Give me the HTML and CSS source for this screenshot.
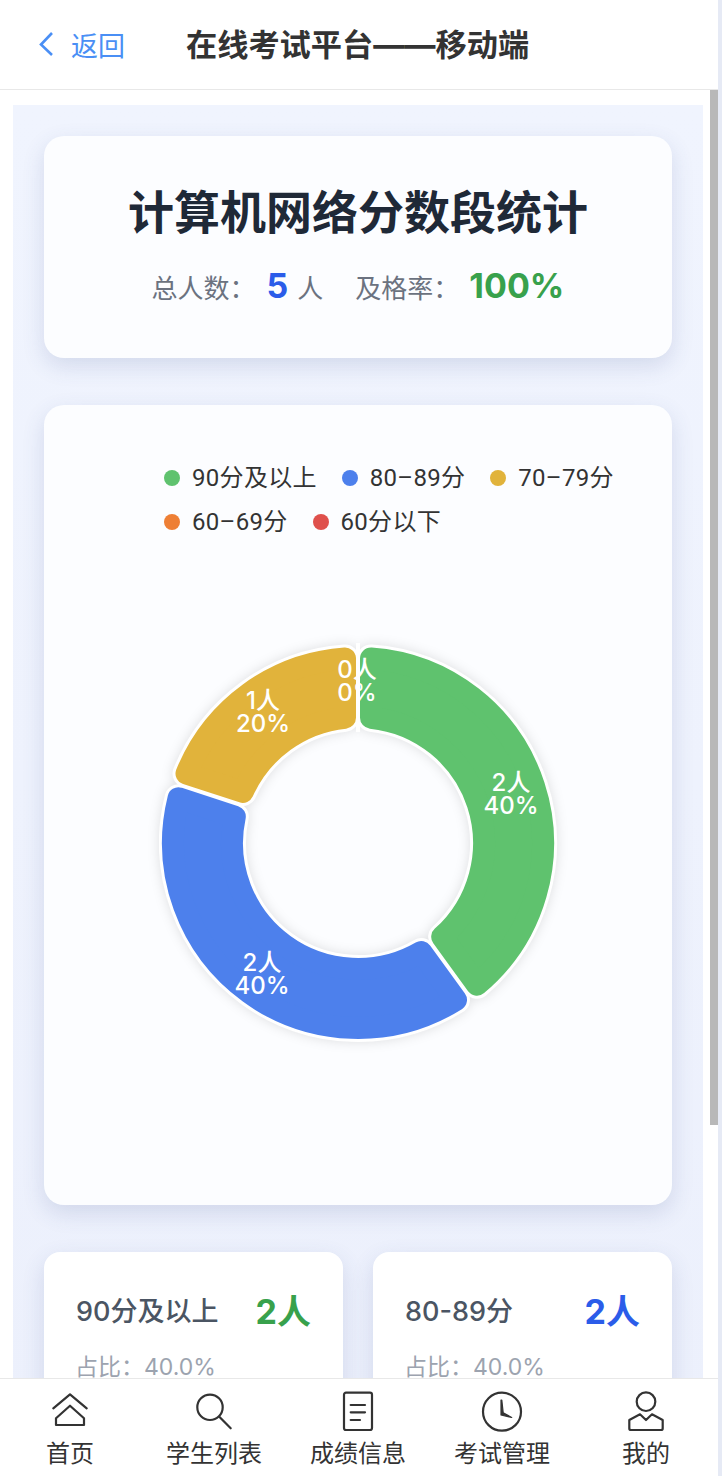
FILE: index.html
```html
<!DOCTYPE html>
<html lang="zh-CN">
<head>
    <meta charset="UTF-8">
    <meta name="viewport" content="width=device-width, initial-scale=1.0">
    <title>在线考试平台——移动端</title>
    <link rel="stylesheet" href="styles.css">
</head>
<body>
    <div class="app">
        <header class="topbar">
            <a class="back" href="#">
                <svg class="back-icon" viewBox="0 0 16 26"><polyline points="14,2 3,13.5 14,24"/></svg>
                <span>返回</span>
            </a>
            <h1 class="topbar-title">在线考试平台——移动端</h1>
        </header>

        <div class="viewport">
            <div class="scroll-area">
                <main class="main">
                    <section class="card summary">
                        <h2 class="summary-title">计算机网络分数段统计</h2>
                        <div class="summary-line">
                            <span>总人数：</span><b class="num num-blue">5</b><span class="unit">人</span>
                            <span class="pass-label">及格率：</span><b class="num num-green">100%</b>
                        </div>
                    </section>

                    <section class="card chart-card">
                        <ul class="legend">
                            <li><i class="dot dot-green"></i>90分及以上</li>
                            <li><i class="dot dot-blue"></i>80–89分</li>
                            <li><i class="dot dot-yellow"></i>70–79分</li>
                            <li><i class="dot dot-orange"></i>60–69分</li>
                            <li><i class="dot dot-red"></i>60分以下</li>
                        </ul>
                        <svg class="donut" viewBox="-210 -210 420 420">
                            <g class="donut-edge">
                                <path d="M13 -184.5 A185 185 0 0 1 119 141.7 L84.2 93.8 A126 126 0 0 0 13 -125.3 Z"/>
                                <path d="M98 156.9 A185 185 0 0 1 -179.5 -44.7 L-123.2 -26.4 A126 126 0 0 0 63.2 109 Z"/>
                                <path d="M-171.5 -69.4 A185 185 0 0 1 -13 -184.5 L-13 -125.3 A126 126 0 0 0 -115.2 -51.1 Z"/>
                            </g>
                            <path class="slice slice-green" d="M13 -184.5 A185 185 0 0 1 119 141.7 L84.2 93.8 A126 126 0 0 0 13 -125.3 Z"/>
                            <path class="slice slice-blue" d="M98 156.9 A185 185 0 0 1 -179.5 -44.7 L-123.2 -26.4 A126 126 0 0 0 63.2 109 Z"/>
                            <path class="slice slice-yellow" d="M-171.5 -69.4 A185 185 0 0 1 -13 -184.5 L-13 -125.3 A126 126 0 0 0 -115.2 -51.1 Z"/>
                            <line class="slice-zero" x1="0" y1="-200" x2="0" y2="-111"/>
                            <text class="donut-label" x="153" y="-61">2人</text>
                            <text class="donut-label" x="153" y="-38">40%</text>
                            <text class="donut-label" x="-96" y="119">2人</text>
                            <text class="donut-label" x="-96" y="142">40%</text>
                            <text class="donut-label" x="-95" y="-143">1人</text>
                            <text class="donut-label" x="-95" y="-120">20%</text>
                            <text class="donut-label" x="-1" y="-174">0人</text>
                            <text class="donut-label" x="-1" y="-151">0%</text>
                        </svg>
                    </section>

                    <section class="stats">
                        <div class="card stat">
                            <div class="stat-row">
                                <span class="stat-name">90分及以上</span>
                                <b class="stat-count num-green">2人</b>
                            </div>
                            <div class="stat-share">占比：40.0%</div>
                        </div>
                        <div class="card stat">
                            <div class="stat-row">
                                <span class="stat-name">80-89分</span>
                                <b class="stat-count num-blue">2人</b>
                            </div>
                            <div class="stat-share">占比：40.0%</div>
                        </div>
                    </section>
                </main>
            </div>
            <div class="scrollbar"><div class="scrollbar-thumb"></div></div>
        </div>

        <nav class="tabbar">
            <a class="tab" href="#">
                <svg class="tab-icon" viewBox="0 0 44 44">
                    <polyline points="5.3,18.3 22,4.3 38.7,18.3"/>
                    <path d="M8 28.3 L22 15.7 L36 28.3 V35 H8 Z"/>
                </svg>
                <span>首页</span>
            </a>
            <a class="tab" href="#">
                <svg class="tab-icon" viewBox="0 0 44 44">
                    <circle cx="18" cy="17.3" r="12.7"/>
                    <line x1="27.3" y1="26.7" x2="38.7" y2="38.3"/>
                </svg>
                <span>学生列表</span>
            </a>
            <a class="tab" href="#">
                <svg class="tab-icon" viewBox="0 0 44 44">
                    <rect x="8" y="2.7" width="28" height="37.3" rx="2"/>
                    <line x1="14.7" y1="15" x2="29" y2="15"/>
                    <line x1="14.7" y1="22.3" x2="29" y2="22.3"/>
                    <line x1="14.7" y1="30" x2="24" y2="30"/>
                </svg>
                <span>成绩信息</span>
            </a>
            <a class="tab" href="#">
                <svg class="tab-icon" viewBox="0 0 44 44">
                    <circle cx="22" cy="21.7" r="19"/>
                    <path class="clock-hands" d="M21 10 V25 L31.7 27.5 L23.2 22.7 L21.8 10 Z"/>
                </svg>
                <span>考试管理</span>
            </a>
            <a class="tab" href="#">
                <svg class="tab-icon" viewBox="0 0 44 44">
                    <circle cx="22" cy="11.7" r="9.3"/>
                    <path d="M5.3 30 L16 24.3 L22 30 L28 24.3 L38.7 30 V38.5 Q38.7 40 37 40 H7 Q5.3 40 5.3 38.5 Z"/>
                </svg>
                <span>我的</span>
            </a>
        </nav>
    </div>
    <div class="edge"></div>
</body>
</html>
```

FILE: styles.css
```css
* {
    box-sizing: border-box;
}
html, body {
    height: 100%;
}
body {
    margin: 0;
    display: flex;
    overflow: hidden;
    background-color: #fff;
    color: #333;
    font-family: Inter, "Noto Sans CJK SC", sans-serif;
}
a {
    color: inherit;
    text-decoration: none;
}
.app {
    flex: 1;
    min-width: 0;
    display: flex;
    flex-direction: column;
}
.edge {
    width: 4px;
    background-color: #e6eaf5;
}

/* top bar */
.topbar {
    height: 90px;
    flex-shrink: 0;
    display: flex;
    align-items: center;
    padding-left: 38px;
    background-color: #fff;
    border-bottom: 1px solid #e8e8e8;
}
.back {
    display: flex;
    align-items: center;
    gap: 17px;
    margin-bottom: 1px;
    color: #4a8ff5;
    font-size: 27px;
}
.back-icon {
    width: 16px;
    height: 26px;
    fill: none;
    stroke: #4a8ff5;
    stroke-width: 2.6;
}
.topbar-title {
    margin: 0 0 4px 61px;
    font-size: 31.2px;
    font-weight: 700;
    color: #333;
}

/* scrolling part */
.viewport {
    flex: 1;
    min-height: 0;
    display: flex;
}
.scroll-area {
    flex: 1;
    min-width: 0;
    overflow: hidden;
    padding: 15px 7px 0 13px;
}
.scrollbar {
    width: 8px;
    flex-shrink: 0;
}
.scrollbar-thumb {
    height: 1035px;
    background-color: #b8b8b8;
}
.main {
    padding: 31px;
    background: linear-gradient(180deg, #f0f4fe, #ecf0fc);
}
.card {
    background-color: #fcfdff;
    border-radius: 20px;
    box-shadow: 0 8px 22px rgba(60, 80, 140, 0.16);
}

/* summary card */
.summary {
    padding: 46px 0 47px;
    text-align: center;
}
.summary-title {
    margin: 0;
    font-size: 46px;
    line-height: 60px;
    font-weight: 700;
    color: #1f2937;
}
.summary-line {
    margin-top: 19px;
    height: 50px;
    display: flex;
    justify-content: center;
    align-items: baseline;
    font-size: 26px;
    line-height: 50px;
    color: #6b7280;
}
.num {
    margin-left: 11px;
    font-size: 34px;
    font-weight: 700;
}
.num-blue {
    color: #2b5ce9;
}
.num-green {
    color: #38a14c;
}
.unit {
    margin-left: 9px;
}
.pass-label {
    margin-left: 32px;
}
.pass-label + .num {
    margin-left: 10px;
}

/* chart card */
.chart-card {
    margin-top: 47px;
    padding: 51px 0 152px;
    display: flex;
    flex-direction: column;
    align-items: center;
}
.legend {
    width: 100%;
    margin: 0;
    padding: 0 30px 0 120px;
    list-style: none;
    display: flex;
    flex-wrap: wrap;
    column-gap: 25px;
    font-family: Roboto, "Noto Sans CJK SC", sans-serif;
    font-size: 24px;
    line-height: 44px;
    letter-spacing: 0.3px;
    color: #333;
}
.legend li {
    display: flex;
    align-items: center;
    gap: 12px;
}
.dot {
    width: 16px;
    height: 16px;
    border-radius: 50%;
}
.dot-green {
    background-color: #5fc26e;
}
.dot-blue {
    background-color: #4d80ec;
}
.dot-yellow {
    background-color: #e1b33b;
}
.dot-orange {
    background-color: #ee7f35;
}
.dot-red {
    background-color: #df504c;
}
.donut {
    width: 420px;
    height: 420px;
    margin-top: 89px;
}
.donut-edge {
    fill: #fff;
    stroke: #fff;
    stroke-width: 28;
    stroke-linejoin: round;
    filter: drop-shadow(0 0 6px rgba(0, 0, 0, 0.12));
}
.slice {
    stroke-width: 22;
    stroke-linejoin: round;
}
.slice-green {
    fill: #5fc26e;
    stroke: #5fc26e;
}
.slice-blue {
    fill: #4d80ec;
    stroke: #4d80ec;
}
.slice-yellow {
    fill: #e1b33b;
    stroke: #e1b33b;
}
.slice-zero {
    stroke: #fff;
    stroke-width: 4;
}
.donut-label {
    fill: #fff;
    font-size: 24px;
    font-weight: 500;
    text-anchor: middle;
    dominant-baseline: central;
}

/* score band cards */
.stats {
    margin-top: 47px;
    display: grid;
    grid-template-columns: 1fr 1fr;
    gap: 30px;
}
.stat {
    padding: 33px 32px;
    border-radius: 16px;
    background-color: #fff;
}
.stat-row {
    height: 48px;
    display: flex;
    justify-content: space-between;
    align-items: center;
}
.stat-name {
    font-size: 27px;
    font-weight: 500;
    color: #4b5563;
}
.stat-count {
    font-size: 34px;
    font-weight: 700;
}
.stat-share {
    margin: 18px 0 0 -1px;
    font-size: 23px;
    line-height: 32px;
    color: #9ca3af;
}

/* bottom tabs */
.tabbar {
    height: 98px;
    flex-shrink: 0;
    display: grid;
    grid-template-columns: repeat(5, 144px);
    justify-content: center;
    padding: 11px 2px 0 0;
    background-color: #fff;
    border-top: 1px solid #e8e8e8;
    position: relative;
}
.tab {
    display: flex;
    flex-direction: column;
    align-items: center;
    gap: 4px;
    font-size: 24px;
    line-height: 32px;
    color: #333;
}
.tab-icon {
    width: 44px;
    height: 44px;
    fill: none;
    stroke: #333;
    stroke-width: 2.2;
    stroke-linejoin: round;
    stroke-linecap: round;
}
.clock-hands {
    fill: #333;
    stroke-width: 1.2;
}
```
